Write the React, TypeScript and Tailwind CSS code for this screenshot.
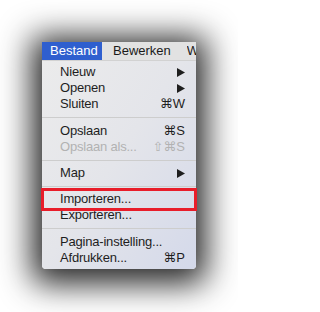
import React from "react";

type Item =
  | { label: string; shortcut?: string; arrow?: boolean; disabled?: boolean }
  | { sep: true; h: string };

const items: Item[] = [
  { label: "Nieuw", arrow: true },
  { label: "Openen", arrow: true },
  { label: "Sluiten", shortcut: "⌘W" },
  { sep: true, h: "h-[11px]" },
  { label: "Opslaan", shortcut: "⌘S" },
  { label: "Opslaan als...", shortcut: "⇧⌘S", disabled: true },
  { sep: true, h: "h-[10px]" },
  { label: "Map", arrow: true },
  { sep: true, h: "h-[10px]" },
  { label: "Importeren..." },
  { label: "Exporteren..." },
  { sep: true, h: "h-[11px]" },
  { label: "Pagina-instelling..." },
  { label: "Afdrukken...", shortcut: "⌘P" },
];

const Arrow = () => (
  <svg width="8" height="9" viewBox="0 0 8 9" className="block">
    <polygon points="0,0 8,4.5 0,9" fill="#1e1e1e" />
  </svg>
);

export default function App() {
  return (
    <div
      className="w-[238px] h-[312px] bg-white pt-[42px] pl-[42px] overflow-hidden"
      style={{ fontFamily: '"Liberation Sans", "DejaVu Sans", sans-serif' }}
    >
      <div className="relative w-[154px] h-[227px] rounded-b-[4px] shadow-[0_5px_32px_10px_rgba(0,0,0,0.85)] bg-linear-to-br from-[#ececec] via-[#e4e5ea] to-[#d4d9ea]">
        <div className="flex items-center h-[19px] bg-[#e2e2e2] text-[13px] text-[#1a1a1a] overflow-hidden whitespace-nowrap border-b border-[#d2d2d2]">
          <div className="h-full w-[60px] shrink-0 bg-[#2f5fcf] text-white pl-2 flex items-center">
            Bestand
          </div>
          <div className="ml-[11px] shrink-0">Bewerken</div>
          <div className="ml-[16px] w-[13px] shrink-0 overflow-hidden">We</div>
        </div>
        <div className="pt-[3px] pb-[3px] text-[13px]">
          {items.map((it, i) =>
            "sep" in it ? (
              <div key={i} className={`${it.h} flex items-center`}>
                <div className="w-full h-px bg-[#cdcdcd]" />
              </div>
            ) : (
              <div
                key={i}
                className={`h-4 flex items-center justify-between pl-[18px] pr-[11px] ${
                  it.disabled ? "text-[#b2b2b2]" : "text-[#1e1e1e]"
                }`}
              >
                <span className="tracking-[-0.2px]">{it.label}</span>
                {it.arrow ? <Arrow /> : it.shortcut ? <span>{it.shortcut}</span> : null}
              </div>
            )
          )}
        </div>
        <div className="absolute left-[-1px] top-[146px] w-[156px] h-[23px] border-[3px] border-[#e81d2a]" />
      </div>
    </div>
  );
}
